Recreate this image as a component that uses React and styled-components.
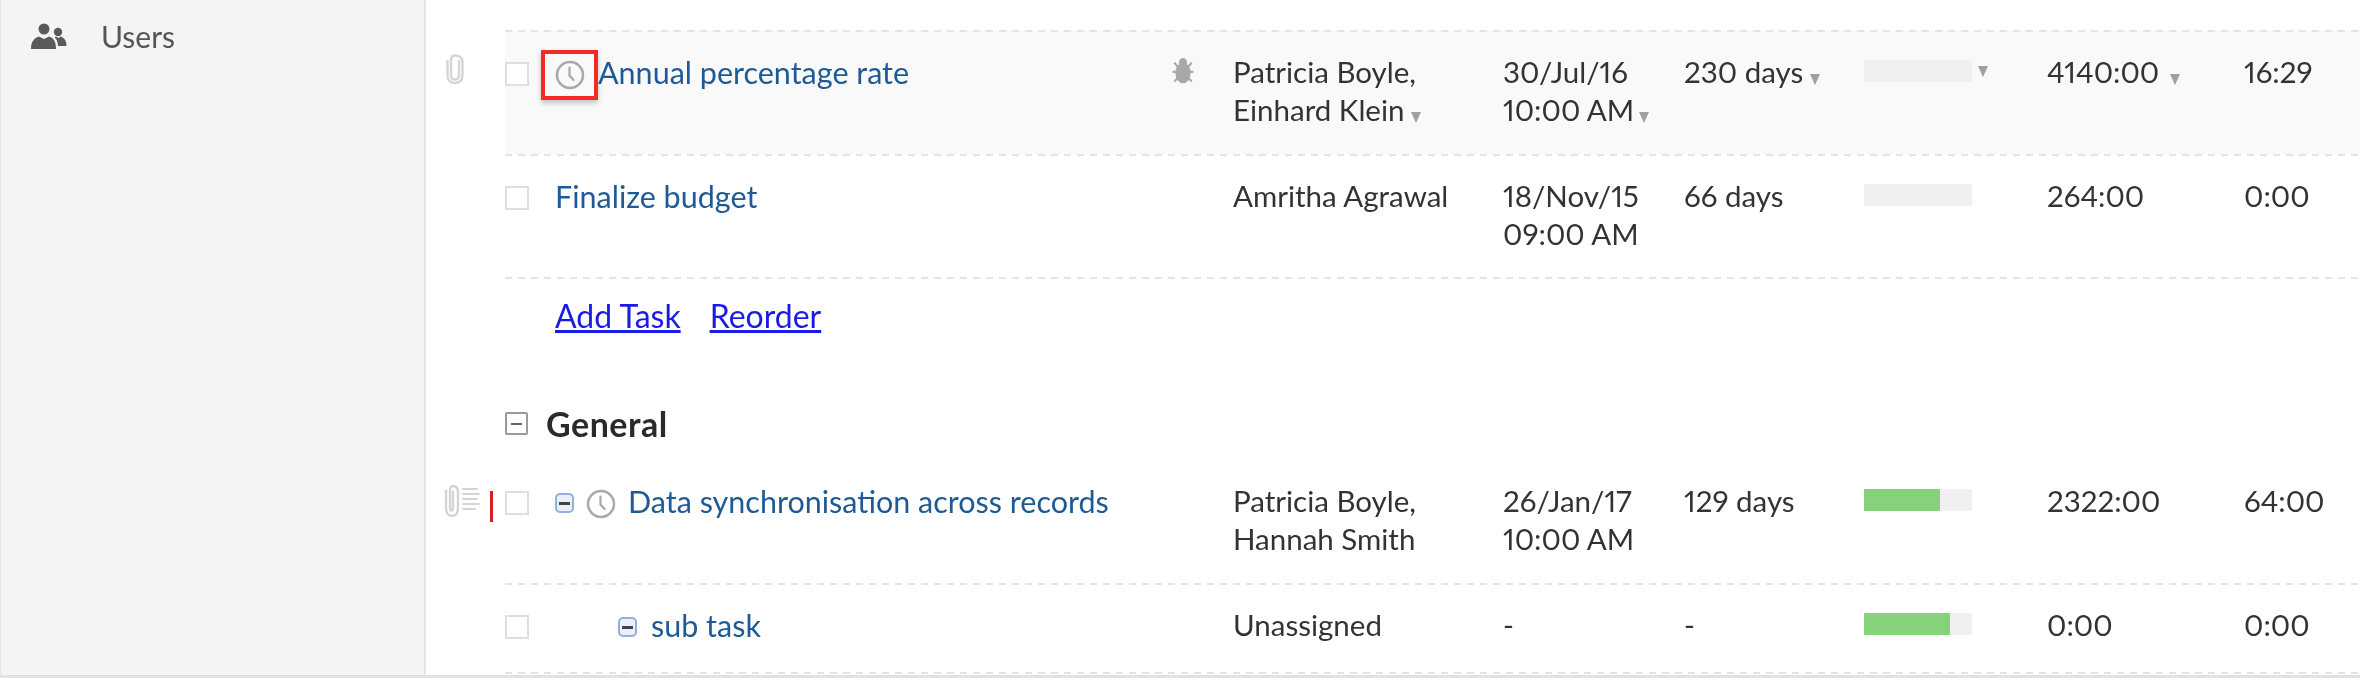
import React from "react";
import styled, { createGlobalStyle } from "styled-components";

const Global = createGlobalStyle`
  html, body { margin: 0; padding: 0; background: #fff; }
  body { font-family: "Lato", "Liberation Sans", sans-serif; overflow: hidden; font-variant-numeric: proportional-nums; }
`;

const Page = styled.div`
  display: flex;
  width: 2360px;
  height: 678px;
  overflow: hidden;
  box-sizing: border-box;
  border-bottom: 3px solid #e2e2e2;
  filter: blur(0.6px);
`;

const Sidebar = styled.aside`
  width: 426px;
  flex: none;
  box-sizing: border-box;
  background: #f4f4f4;
  border-left: 1px solid #e4e4e4;
  border-right: 2px solid #e4e4e4;
  padding: 19px 0 0 30px;
`;

const NavItem = styled.div`
  display: flex;
  align-items: center;
  gap: 34px;
  font-size: 30px;
  line-height: 34px;
  color: #555;
`;

const Main = styled.main`
  flex: 1;
  padding-top: 30px;
  min-width: 0;
`;

const Line = styled.div`
  display: flex;
`;

const Gutter = styled.div`
  width: 79px;
  flex: none;
  display: flex;
  align-items: flex-start;
  justify-content: flex-end;
  gap: 10px;
  padding: ${(p) => p.$pad || "23px 12px 0 0"};
  box-sizing: border-box;
`;

const dash = "repeating-linear-gradient(90deg, #e4e4e4 0 7px, transparent 7px 13px)";

const Row = styled.div`
  flex: 1;
  height: ${(p) => p.$h}px;
  box-sizing: border-box;
  padding-top: 23px;
  display: grid;
  grid-template-columns: 50px 615px 63px 270px 181px 180px 183px 197px 1fr;
  align-items: start;
  background-color: ${(p) => (p.$active ? "#f9f9f9" : "transparent")};
  background-image: ${(p) => (p.$noLine ? "none" : dash)}, ${(p) => (p.$lastLine ? dash : "none")};
  background-size: 100% 2px, 100% 2px;
  background-repeat: no-repeat;
  background-position: top left, bottom left;
`;

const Divider = styled.div`
  height: 2px;
  margin-left: 79px;
  background-image: ${dash};
`;

const Cell = styled.div`
  font-size: 29.5px;
  line-height: 38px;
  color: #333;
  white-space: nowrap;
`;

const BugCell = styled.div`
  display: flex;
  padding: 4px 0 0 1px;
`;

const Checkbox = styled.span`
  display: block;
  width: 24px;
  height: 24px;
  margin-top: 9px;
  box-sizing: border-box;
  border: 2px solid #dfdfdf;
  background: #fff;
`;

const TitleCell = styled.div`
  display: flex;
  align-items: center;
  height: 38px;
  padding-left: ${(p) => p.$indent || 0}px;
`;

const TaskLink = styled.a`
  font-size: 30.5px;
  line-height: 38px;
  color: #1d5a96;
  white-space: nowrap;
  margin-left: ${(p) => p.$gap || 0}px;
`;

const Highlight = styled.span`
  display: flex;
  align-items: center;
  justify-content: center;
  width: 57px;
  height: 50px;
  flex: none;
  box-sizing: border-box;
  margin: 6px 0 0 -14px;
  border: 4px solid #f22c22;
  box-shadow: 0 3px 5px rgba(0, 0, 0, 0.22);
`;

const ClockSlot = styled.span`
  display: flex;
  margin: 5px 0 0 12px;
`;

const Expand = styled.span`
  display: flex;
  align-items: center;
  justify-content: center;
  width: 19px;
  height: 20px;
  flex: none;
  margin-top: 4px;
  box-sizing: border-box;
  border: 2px solid #8fb0e0;
  border-radius: 5px;
  background: #e9f0fa;
  &::before {
    content: "";
    width: 11px;
    height: 3px;
    background: #444;
  }
`;

const Caret = styled.span`
  display: inline-block;
  width: 0;
  height: 0;
  margin-left: ${(p) => p.$gap ?? 7}px;
  vertical-align: -2px;
  border-left: 5px solid transparent;
  border-right: 5px solid transparent;
  border-top: 11px solid #a0a0a0;
`;

const ProgressWrap = styled.div`
  display: flex;
  align-items: flex-start;
  padding-top: 7px;
`;

const Track = styled.div`
  width: 108px;
  height: 22px;
  background: #f0f0f0;
`;

const Fill = styled.div`
  height: 100%;
  background: #85d27a;
`;

const BarCaret = styled(Caret)`
  margin: 6px 0 0 6px;
`;

const Actions = styled.div`
  display: flex;
  gap: 29px;
  height: 83px;
  padding: 18px 0 0 129px;
  box-sizing: border-box;
`;

const ActionLink = styled.a`
  font-size: 32px;
  line-height: 38px;
  color: #1a1ae6;
  text-decoration: underline;
  cursor: pointer;
`;

const SectionHeader = styled.div`
  display: flex;
  align-items: center;
  gap: 18px;
  height: 97px;
  padding: 26px 0 0 79px;
  box-sizing: border-box;
  font-size: 34px;
  letter-spacing: 0.5px;
  font-weight: 700;
  color: #2a2a2a;
`;

const Collapse = styled.span`
  display: flex;
  align-items: center;
  justify-content: center;
  width: 23px;
  height: 23px;
  box-sizing: border-box;
  border: 2px solid #9a9a9a;
  border-radius: 2px;
  &::before {
    content: "";
    width: 11px;
    height: 2px;
    background: #666;
  }
`;

const Marker = styled.span`
  display: block;
  width: 3px;
  height: 31px;
  margin-top: 8px;
  background: #d81e1e;
`;

const Clock = ({ size = 30 }) => (
  <svg width={size} height={size} viewBox="0 0 30 30" fill="none" stroke="#a8a8a8">
    <circle cx="15" cy="15" r="13" strokeWidth="2.5" />
    <path d="M14.5 7.5V15.5L18.5 20" strokeWidth="2.2" strokeLinecap="round" strokeLinejoin="round" />
  </svg>
);

const Clip = () => (
  <svg width="18" height="32" viewBox="0 0 18 32" fill="none" stroke="#d4d4d4" strokeWidth="2.4" strokeLinecap="round">
    <path d="M13 8V22C13 25 11.5 26.5 9 26.5S5 25 5 22V7C5 4 6.5 2.5 9 2.5" />
    <path d="M9 2.5C13.5 2.5 16.5 5 16.5 9V22C16.5 27.5 13.5 30 9 30S1.5 27.5 1.5 22V8" />
  </svg>
);

const ClipNote = () => (
  <svg width="36" height="36" viewBox="0 0 36 36" fill="none" stroke="#d4d4d4" strokeWidth="2.4" strokeLinecap="round">
    <path d="M9 9V24C9 26.5 8.5 27.5 7.5 27.5S6 26.5 6 24V8C6 5 7 3 8.5 3" />
    <path d="M8.5 3C12 3 14 5 14 9V25C14 30 11.5 33 8 33S2 30 2 25V8" />
    <path d="M19 6H33M19 11H35M19 16H33M19 21H35M19 26H31" strokeWidth="2" />
  </svg>
);

const Bug = () => (
  <svg width="24" height="28" viewBox="0 0 30 30" preserveAspectRatio="none" fill="#a8a8a8">
    <ellipse cx="15" cy="17" rx="9.5" ry="11" />
    <circle cx="15" cy="6" r="5" />
    <path d="M4 6L9 11M26 6L21 11M2 16H8M28 16H22M4 26L9 22M26 26L21 22" stroke="#a8a8a8" strokeWidth="2.4" fill="none" />
  </svg>
);

const UsersIcon = () => (
  <svg width="36" height="26" viewBox="0 0 36 26" fill="#5a5a5a">
    <circle cx="13" cy="6" r="5.5" />
    <path d="M0 26C0 19 3 15 8 13.5L13 16L18 13.5C23 15 25 19 25 26Z" />
    <circle cx="27" cy="9" r="4.2" />
    <path d="M25 13.5L27.5 15L30 13.5C33.5 15 35.5 18 35.5 23H27C26.8 19.5 26 16 23.5 14.5Z" />
  </svg>
);

const Progress = ({ value, caret }) => (
  <ProgressWrap>
    <Track>
      <Fill style={{ width: `${value}%` }} />
    </Track>
    {caret && <BarCaret />}
  </ProgressWrap>
);

export default function App() {
  return (
    <>
      <Global />
      <Page>
        <Sidebar>
          <NavItem>
            <UsersIcon />
            Users
          </NavItem>
        </Sidebar>
        <Main>
          <Line>
            <Gutter $pad="23px 41px 0 0">
              <Clip />
            </Gutter>
            <Row $h={124} $active>
              <Checkbox />
              <TitleCell>
                <Highlight>
                  <Clock />
                </Highlight>
                <TaskLink>Annual percentage rate</TaskLink>
              </TitleCell>
              <BugCell><Bug /></BugCell>
              <Cell>Patricia Boyle,<br />Einhard Klein<Caret /></Cell>
              <Cell>30/Jul/16<br />10:00 AM<Caret $gap={5} /></Cell>
              <Cell>230 days<Caret /></Cell>
              <Progress value={0} caret />
              <Cell>4140:00<Caret $gap={11} /></Cell>
              <Cell>16:29</Cell>
            </Row>
          </Line>
          <Line>
            <Gutter />
            <Row $h={123}>
              <Checkbox />
              <TitleCell><TaskLink>Finalize budget</TaskLink></TitleCell>
              <span />
              <Cell>Amritha Agrawal</Cell>
              <Cell>18/Nov/15<br />09:00 AM</Cell>
              <Cell>66 days</Cell>
              <Progress value={0} />
              <Cell>264:00</Cell>
              <Cell>0:00</Cell>
            </Row>
          </Line>
          <Divider />
          <Actions>
            <ActionLink>Add Task</ActionLink>
            <ActionLink>Reorder</ActionLink>
          </Actions>
          <SectionHeader>
            <Collapse />
            General
          </SectionHeader>
          <Line>
            <Gutter $pad="24px 12px 0 0">
              <ClipNote />
              <Marker />
            </Gutter>
            <Row $h={124} $noLine>
              <Checkbox />
              <TitleCell>
                <Expand />
                <ClockSlot><Clock /></ClockSlot>
                <TaskLink $gap={12}>Data synchronisation across records</TaskLink>
              </TitleCell>
              <span />
              <Cell>Patricia Boyle,<br />Hannah Smith</Cell>
              <Cell>26/Jan/17<br />10:00 AM</Cell>
              <Cell>129 days</Cell>
              <Progress value={70} />
              <Cell>2322:00</Cell>
              <Cell>64:00</Cell>
            </Row>
          </Line>
          <Line>
            <Gutter />
            <Row $h={91} $lastLine>
              <Checkbox />
              <TitleCell $indent={63}>
                <Expand />
                <TaskLink $gap={14}>sub task</TaskLink>
              </TitleCell>
              <span />
              <Cell>Unassigned</Cell>
              <Cell>-</Cell>
              <Cell>-</Cell>
              <Progress value={80} />
              <Cell>0:00</Cell>
              <Cell>0:00</Cell>
            </Row>
          </Line>
        </Main>
      </Page>
    </>
  );
}
